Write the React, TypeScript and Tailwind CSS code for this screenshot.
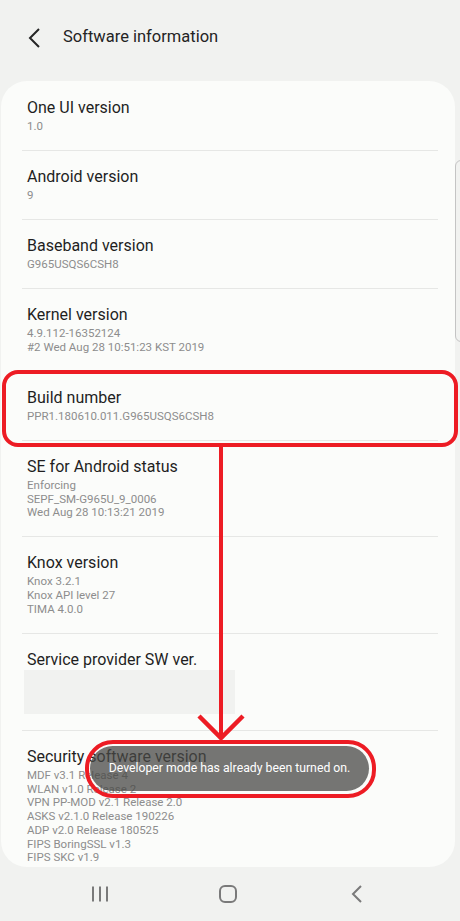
const rows: { title: string; lines: string[] }[] = [
  { title: "One UI version", lines: ["1.0"] },
  { title: "Android version", lines: ["9"] },
  { title: "Baseband version", lines: ["G965USQS6CSH8"] },
  {
    title: "Kernel version",
    lines: ["4.9.112-16352124", "#2 Wed Aug 28 10:51:23 KST 2019"],
  },
  { title: "Build number", lines: ["PPR1.180610.011.G965USQS6CSH8"] },
  {
    title: "SE for Android status",
    lines: ["Enforcing", "SEPF_SM-G965U_9_0006", "Wed Aug 28 10:13:21 2019"],
  },
  {
    title: "Knox version",
    lines: ["Knox 3.2.1", "Knox API level 27", "TIMA 4.0.0"],
  },
];

const security = [
  "MDF v3.1 Release 4",
  "WLAN v1.0 Release 2",
  "VPN PP-MOD v2.1 Release 2.0",
  "ASKS v2.1.0 Release 190226",
  "ADP v2.0 Release 180525",
  "FIPS BoringSSL v1.3",
  "FIPS SKC v1.9",
  "FIPS SCrypto v2.2",
];

function Row({ title, lines, last }: { title: string; lines: string[]; last?: boolean }) {
  return (
    <div className={last ? "" : "border-b border-[#e6e7e5]"}>
      <div className="pl-[5px] pt-4 pb-[16.25px]">
        <p className="text-[16px] leading-[20px] text-[#1f1f1f]">{title}</p>
        <div className="mt-[2px]">
          {lines.map((l) => (
            <p key={l} className="text-[11.5px] leading-[13.75px] text-[#8d8d8d]">
              {l}
            </p>
          ))}
        </div>
      </div>
    </div>
  );
}

export default function App() {
  return (
    <div
      className="relative h-[921px] w-[460px] overflow-hidden bg-[#f1f2f0] flex flex-col"
      style={{ fontFamily: "Roboto, 'Noto Sans', sans-serif" }}
    >
      {/* header */}
      <div className="h-[81px] shrink-0 flex items-start pt-[24px]">
        <svg width="24" height="26" viewBox="0 0 24 26" className="ml-[23px] mt-[1px]">
          <path d="M16 4 L7 13 L16 22" fill="none" stroke="#262626" strokeWidth="2" />
        </svg>
        <h1 className="ml-[16px] text-[16.5px] leading-[26px] text-[#242424]">
          Software information
        </h1>
      </div>

      {/* card */}
      <div className="ml-[1px] w-[454px] flex-1 overflow-hidden rounded-[26px] bg-[#fbfcfa]">
        <div className="ml-[21px] mr-[17px] pt-px">
          {rows.map((r) => (
            <Row key={r.title} title={r.title} lines={r.lines} />
          ))}
          <div className="border-b border-[#e6e7e5]">
            <div className="pt-4 pb-4">
              <p className="pl-[5px] text-[16px] leading-[20px] text-[#1f1f1f]">
                Service provider SW ver.
              </p>
              <div className="ml-[2px] h-[44px] w-[211px] bg-[#f1f2f0]" />
            </div>
          </div>
          <Row title="Security software version" lines={security} last />
        </div>
      </div>

      {/* nav bar */}
      <div className="h-[54px] shrink-0 flex items-center pl-[90px]">
        <svg width="20" height="18" viewBox="0 0 20 18">
          <path d="M3 1.5v15M10 1.5v15M17 1.5v15" stroke="#7a7a7a" strokeWidth="2" />
        </svg>
        <svg width="20" height="20" viewBox="0 0 20 20" className="ml-[108px]">
          <rect x="2" y="2" width="16" height="16" rx="5" fill="none" stroke="#7a7a7a" strokeWidth="2" />
        </svg>
        <svg width="14" height="20" viewBox="0 0 14 20" className="ml-[112px]">
          <path d="M11 2 L3 10 L11 18" fill="none" stroke="#7a7a7a" strokeWidth="2" />
        </svg>
      </div>

      {/* scrollbar */}
      <div className="absolute left-[455px] top-[160px] h-[182px] w-[12px] rounded-[6px] border border-[#c4c4c4]" />

      {/* annotations */}
      <div className="absolute left-[2px] top-[370px] h-[77px] w-[456px] rounded-[16px] border-4 border-[#ed1c24]" />
      <div className="absolute left-[219px] top-[446px] h-[292px] w-[4px] bg-[#ed1c24]" />
      <svg className="absolute left-0 top-0" width="460" height="921" viewBox="0 0 460 921">
        <path d="M199 716 L221 738 L243 716" fill="none" stroke="#ed1c24" strokeWidth="4.5" />
      </svg>
      <div className="absolute left-[90px] top-[746px] h-[45px] w-[279px] rounded-full bg-[rgba(72,72,70,0.75)] flex items-center justify-center">
        <span className="text-[12.25px] text-white">Developer mode has already been turned on.</span>
      </div>
      <div className="absolute left-[85px] top-[740px] h-[58px] w-[291px] rounded-[28px] border-4 border-[#ed1c24]" />
    </div>
  );
}
